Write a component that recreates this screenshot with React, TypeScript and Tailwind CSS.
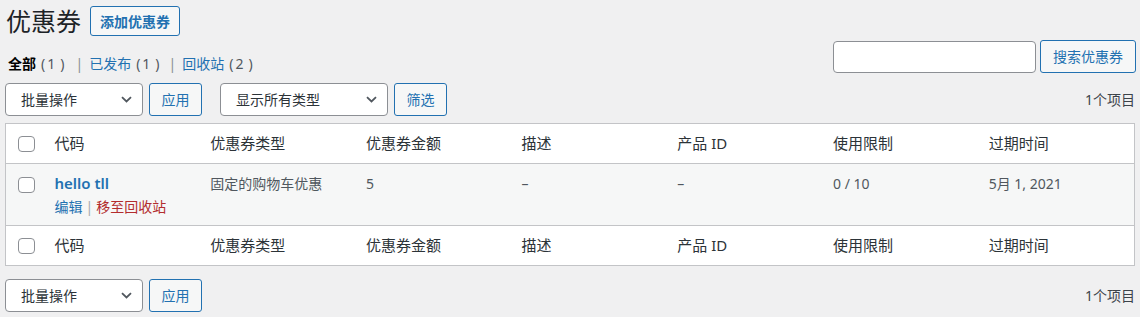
import React from 'react';

const FONT = { fontFamily: '"Noto Sans", "Noto Sans CJK SC", sans-serif' };

const Chevron = () => (
  <svg width="11" height="7" viewBox="0 0 11 7" className="shrink-0">
    <path d="M1 1.2 L5.5 5.5 L10 1.2" fill="none" stroke="#50575e" strokeWidth="1.8" />
  </svg>
);

const Select = ({ label, width }: { label: string; width: string }) => (
  <div className={`${width} h-[33px] bg-white border border-[#8c8f94] rounded-[4px] flex items-center justify-between pl-[15px] pr-[10px] text-[14px] text-[#2c3338]`}>
    <span>{label}</span>
    <Chevron />
  </div>
);

const Btn = ({ label, width }: { label: string; width: string }) => (
  <button className={`${width} h-[33px] bg-[#f6f7f7] border border-[#2271b1] rounded-[3px] text-[14px] text-[#2271b1] flex items-center justify-center`}>
    {label}
  </button>
);

const Check = () => <div className="w-[17px] h-[16px] bg-white border border-[#8c8f94] rounded-[4px] ml-[12px]" />;

const Count = ({ n }: { n: number }) => (
  <span className="text-[#50575e]">
    <span className="ml-[5px]">(</span>
    <span className="ml-[2px]">{n}</span>
    <span className="ml-[5px]">)</span>
  </span>
);

const COLUMNS = ['代码', '优惠券类型', '优惠券金额', '描述', '产品 ID', '使用限制', '过期时间'];

const HeaderRow = ({ foot }: { foot?: boolean }) => (
  <tr className={`bg-white ${foot ? 'border-t border-[#c3c4c7]' : 'border-b border-[#c3c4c7]'}`}>
    <td className="h-[40px] p-0 align-middle"><Check /></td>
    {COLUMNS.map(c => (
      <th key={c} className="h-[40px] px-[10px] text-left font-normal text-[15px] text-[#2c3338] align-middle">{c}</th>
    ))}
  </tr>
);

const TableNav = ({ top }: { top?: boolean }) => (
  <div className="flex items-center justify-between">
    <div className="flex items-center">
      <Select label="批量操作" width="w-[138px]" />
      <div className="ml-[6px]"><Btn label="应用" width="w-[53px]" /></div>
      {top && (
        <div className="flex items-center ml-[18px]">
          <Select label="显示所有类型" width="w-[168px]" />
          <div className="ml-[6px]"><Btn label="筛选" width="w-[53px]" /></div>
        </div>
      )}
    </div>
    <span className="text-[14px] text-[#3c434a]">1个项目</span>
  </div>
);

export default function App() {
  return (
    <div style={FONT} className="w-[1140px] h-[317px] bg-[#f0f0f1] px-[5px] overflow-hidden">
      <div className="flex items-center pt-[6px]">
        <h1 className="text-[25px] leading-[30px] text-[#1d2327] font-normal ml-[1px]">优惠券</h1>
        <button className="ml-[9px] h-[30px] px-[9px] bg-[#f6f7f7] border border-[#2271b1] rounded-[3px] text-[14px] font-semibold text-[#2271b1]">添加优惠券</button>
      </div>

      <div className="flex items-end justify-between mt-[4px]">
        <div className="flex items-center text-[14px] leading-[18px] ml-[3px] text-[#646970]">
          <span className="font-bold text-black">全部</span>
          <Count n={1} />
          <span className="ml-[11px] mr-[6px] text-[#8c8f94]">|</span>
          <span className="text-[#2271b1]">已发布</span>
          <Count n={1} />
          <span className="ml-[9px] mr-[6px] text-[#8c8f94]">|</span>
          <span className="text-[#2271b1]">回收站</span>
          <Count n={2} />
        </div>
        <div className="flex items-center mr-[-1px]">
          <div className="w-[203px] h-[32px] bg-white border border-[#8c8f94] rounded-[4px]" />
          <div className="ml-[4px]"><Btn label="搜索优惠券" width="w-[96px]" /></div>
        </div>
      </div>

      <div className="mt-[10px]">
        <TableNav top />
      </div>

      <table className="mt-[7px] w-full table-fixed border border-[#c3c4c7] border-collapse">
        <colgroup>
          <col className="w-[39px]" />
          {COLUMNS.map(c => <col key={c} />)}
        </colgroup>
        <thead><HeaderRow /></thead>
        <tbody>
          <tr className="bg-[#f6f7f7] text-[14px] text-[#50575e]">
            <td className="align-top pt-[13px] p-0"><Check /></td>
            <td className="align-top px-[10px] pt-[9px] pb-[8px]">
              <div className="leading-[21px] font-semibold text-[#2271b1] text-[15px]">hello tll</div>
              <div className="leading-[20px] mt-[3px] text-[14px]">
                <span className="text-[#2271b1]">编辑</span>
                <span className="text-[#a7aaad] mx-[3px]">|</span>
                <span className="text-[#b32d2e]">移至回收站</span>
              </div>
            </td>
            <td className="align-top px-[10px] pt-[10px] leading-[20px]">固定的购物车优惠</td>
            <td className="align-top px-[10px] pt-[10px] leading-[20px]">5</td>
            <td className="align-top px-[10px] pt-[10px] leading-[20px]">–</td>
            <td className="align-top px-[10px] pt-[10px] leading-[20px]">–</td>
            <td className="align-top px-[10px] pt-[10px] leading-[20px]">0 / 10</td>
            <td className="align-top px-[10px] pt-[10px] leading-[20px]">5月 1, 2021</td>
          </tr>
        </tbody>
        <tfoot><HeaderRow foot /></tfoot>
      </table>

      <div className="mt-[13px]">
        <TableNav />
      </div>
    </div>
  );
}
